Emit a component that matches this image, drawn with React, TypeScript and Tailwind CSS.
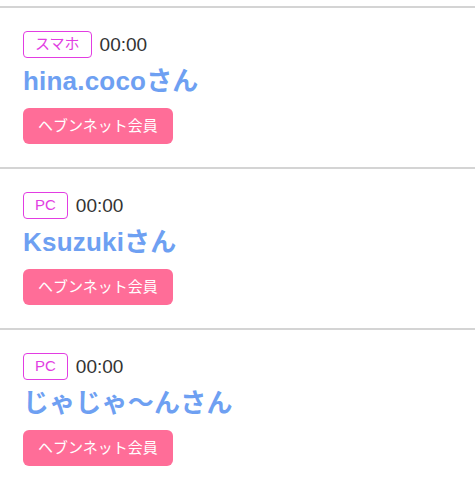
const members = [
  { device: "スマホ", time: "00:00", name: "hina.cocoさん" },
  { device: "PC", time: "00:00", name: "Ksuzukiさん" },
  { device: "PC", time: "00:00", name: "じゃじゃ〜んさん" },
];

export default function App() {
  return (
    <div
      className="min-h-screen bg-white pt-[6px]"
      style={{ fontFamily: '"Liberation Sans", "Noto Sans CJK JP", sans-serif' }}
    >
      {members.map((m, i) => (
        <div key={i} className="border-t-2 border-[#d4d4d4] px-[23px] pt-[23px] pb-[23px]">
          {/* device + time */}
          <div className="flex items-center gap-[8px]">
            <span className="flex h-[27px] items-center rounded-[4px] border-[1.5px] border-[#e23de2] px-[11px] text-[15px] text-[#e23de2]">
              {m.device}
            </span>
            <span className="text-[19px] leading-none text-[#333333]">{m.time}</span>
          </div>

          {/* name */}
          <div className="mt-[6px] text-[26px] font-bold leading-[34px] tracking-[0.2px] text-[#6ea0f2]">
            {m.name}
          </div>

          {/* member badge */}
          <div className="mt-[10px] inline-flex h-[36px] items-center rounded-[6px] bg-[#ff6d98] px-[15px] text-[15px] text-white">
            ヘブンネット会員
          </div>
        </div>
      ))}
    </div>
  );
}
